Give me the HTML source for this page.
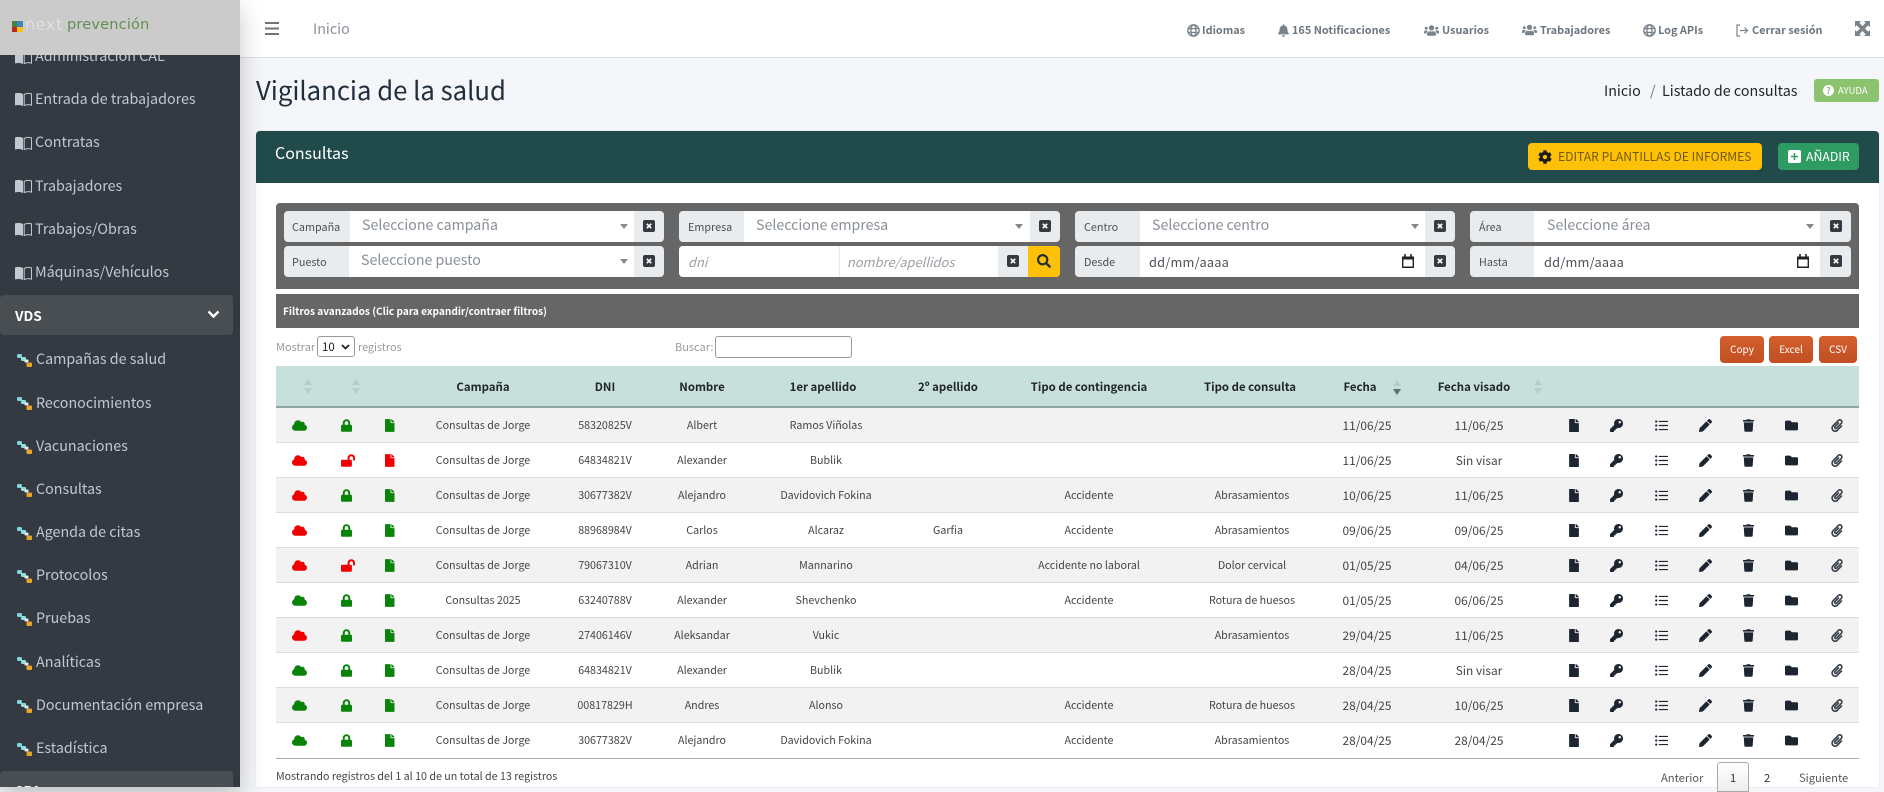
<!DOCTYPE html>
<html lang="es"><head><meta charset="utf-8"><title>Vigilancia de la salud</title>
<style>
*{box-sizing:border-box}
html,body{margin:0;padding:0}
body{width:1884px;height:787px;overflow:hidden;position:relative;background:#f4f6f9;font-family:"Noto Sans CJK JP","Liberation Sans",sans-serif;color:#212529}
.a{position:absolute}
.t{position:absolute;white-space:nowrap;line-height:20px}
svg{position:absolute;fill:currentColor;display:block}
#side{left:0;top:0;width:240px;height:787px;background:#353a42;box-shadow:0 10px 24px rgba(0,0,0,.22);overflow:hidden;z-index:5}
#logo{left:0;top:0;width:240px;height:55px;background:#cbcbcb;z-index:2}
.m{font-size:14.3px;color:#c2c7d0;left:35px}
.s{left:36px}
.pill{left:0;width:233px;background:#494e53;border-radius:4px}
#nav{left:240px;top:0;width:1644px;height:58px;background:#fff;border-bottom:1px solid #dee2e6;z-index:1}
.n{font-size:10.9px;font-weight:700;color:#6c757d;top:20px}
.ni{color:#7b838a}
#card{left:256px;top:131px;width:1623px;height:656px;background:#fff;border-radius:4px 4px 0 0;box-shadow:0 0 1px rgba(0,0,0,.2)}
.ig{position:absolute;height:31px;border-radius:4px;background:#e9ecef}
.in{position:absolute;background:#fff;height:31px}
.lb{font-size:10.8px;color:#495057}
.ph{font-size:14.2px;color:#8a9097;margin-top:1px}
.it{font-size:12.9px;font-style:italic;color:#9aa0a6}
.dt{font-size:12.8px;color:#495057}
.x{position:absolute;width:12px;height:12px;background:#343a40;border-radius:2px;color:#fff}
.caret{position:absolute;width:0;height:0;border-left:4px solid transparent;border-right:4px solid transparent;border-top:5px solid #888}
.h{font-size:11.4px;font-weight:700;color:#212529;top:377px;width:200px;text-align:center}
.sort{position:absolute;width:8px;height:16px;top:379px}
.sort:before,.sort:after{content:"";position:absolute;left:0;border-left:4px solid transparent;border-right:4px solid transparent}
.sort:before{top:0;border-bottom:6px solid #b3cfca}
.sort:after{bottom:1px;border-top:6px solid #b3cfca}
.r{position:absolute;left:276px;width:1583px;height:35px;border-bottom:1px solid #ddd;font-size:10.7px;color:#444}
.r.o{background:#f2f2f2}
.r span{position:absolute;width:220px;text-align:center;top:8px;line-height:20px;white-space:nowrap}
.c1{left:97px}.c2{left:219px}.c3{left:316px}.c4{left:440px}.c5{left:562px}.c6{left:703px}.c7{left:866px}.c8{left:981px;font-size:11.9px}.c9{left:1093px;font-size:11.9px}
.r svg{top:11px;height:13px;color:#1d2531}
.g{color:#0a830a!important}.e{color:#f00000!important}
.i1{left:16px;width:15px}.i2{left:65px;width:11px}.i3{left:109px;width:9.5px}
.a1{left:1293px;width:10px}.a2{left:1334px;width:13px}.a3{left:1379px;width:13px}.a4{left:1423px;width:13px}.a5{left:1467px;width:11px}.a6{left:1509px;width:13px}.a7{left:1555px;width:12px;color:#3a414c!important}
.dtb{position:absolute;top:336px;height:27px;border-radius:4px;background:linear-gradient(#d45f2e,#c14f22);color:#fff;font-size:10px;text-align:center;line-height:25px}
</style></head><body>
<svg width="0" height="0" style="position:absolute"><defs>
<symbol id="file" viewBox="0 0 384 512"><path d="M224 136V0H24C10.7 0 0 10.7 0 24v464c0 13.3 10.7 24 24 24h336c13.3 0 24-10.7 24-24V160H248c-13.2 0-24-10.8-24-24zm160-14.1v6.1H256V0h6.1c6.4 0 12.5 2.5 17 7l97.9 98c4.5 4.5 7 10.6 7 16.9z"/></symbol>
<symbol id="cloud" viewBox="0 0 640 512"><path d="M537.6 226.6c4.1-10.7 6.4-22.4 6.4-34.6 0-53-43-96-96-96-19.7 0-38.1 6-53.3 16.2C367 64.2 315.3 32 256 32c-88.4 0-160 71.6-160 160 0 2.7.1 5.4.2 8.1C40.2 219.8 0 273.2 0 336c0 79.5 64.5 144 144 144h368c70.7 0 128-57.3 128-128 0-61.9-44-113.6-102.4-125.4z"/></symbol>
<symbol id="lock" viewBox="0 0 448 512"><path d="M400 224h-24v-72C376 68.2 307.8 0 224 0S72 68.2 72 152v72H48c-26.5 0-48 21.5-48 48v192c0 26.5 21.5 48 48 48h352c26.5 0 48-21.5 48-48V272c0-26.5-21.5-48-48-48zm-104 0H152v-72c0-39.7 32.3-72 72-72s72 32.3 72 72v72z"/></symbol>
<symbol id="unlock" viewBox="0 0 576 512"><path d="M423.5 0C339.5.3 272 69.5 272 153.5V224H48c-26.5 0-48 21.5-48 48v192c0 26.5 21.5 48 48 48h352c26.5 0 48-21.5 48-48V272c0-26.5-21.5-48-48-48h-48v-71.1c0-39.6 31.7-72.5 71.3-72.9 40-.4 72.7 32.1 72.7 72v80c0 13.3 10.7 24 24 24h32c13.3 0 24-10.7 24-24v-80C576 68 507.5-.3 423.5 0z"/></symbol>
<symbol id="key" viewBox="0 0 512 512"><path d="M512 176.001C512 273.203 433.202 352 336 352c-11.22 0-22.19-1.062-32.827-3.069l-24.012 27.014A23.999 23.999 0 0 1 261.223 384H224v40c0 13.255-10.745 24-24 24h-40v40c0 13.255-10.745 24-24 24H24c-13.255 0-24-10.745-24-24v-78.059c0-6.365 2.529-12.47 7.029-16.971l161.802-161.802C163.108 213.814 160 195.271 160 176 160 78.798 238.797.001 335.999 0 433.488-.001 512 78.511 512 176.001zM336 128c0 26.51 21.49 48 48 48s48-21.49 48-48-21.49-48-48-48-48 21.49-48 48z"/></symbol>
<symbol id="list" viewBox="0 0 512 512"><circle cx="48" cy="96" r="44"/><circle cx="48" cy="256" r="44"/><circle cx="48" cy="416" r="44"/><rect x="150" y="72" width="362" height="48" rx="12"/><rect x="150" y="232" width="362" height="48" rx="12"/><rect x="150" y="392" width="362" height="48" rx="12"/></symbol>
<symbol id="pencil" viewBox="0 0 512 512"><path d="M497.9 142.1l-46.1 46.1c-4.7 4.7-12.3 4.7-17 0l-111-111c-4.7-4.7-4.7-12.3 0-17l46.1-46.1c18.7-18.7 49.1-18.7 67.9 0l60.1 60.1c18.8 18.7 18.8 49.1 0 67.9zM284.2 99.8L21.6 362.4.4 483.9c-2.9 16.4 11.4 30.6 27.8 27.8l121.5-21.3 262.6-262.6c4.7-4.7 4.7-12.3 0-17l-111-111c-4.8-4.7-12.4-4.7-17.1 0z"/></symbol>
<symbol id="trash" viewBox="0 0 448 512"><path d="M432 32H312l-9.4-18.7A24 24 0 0 0 281.1 0H166.8a23.72 23.72 0 0 0-21.4 13.3L136 32H16A16 16 0 0 0 0 48v32a16 16 0 0 0 16 16h416a16 16 0 0 0 16-16V48a16 16 0 0 0-16-16zM53.2 467a48 48 0 0 0 47.9 45h245.8a48 48 0 0 0 47.9-45L416 128H32z"/></symbol>
<symbol id="folder" viewBox="0 0 512 512"><path d="M464 128H272l-64-64H48C21.49 64 0 85.49 0 112v288c0 26.51 21.49 48 48 48h416c26.51 0 48-21.49 48-48V176c0-26.51-21.49-48-48-48z"/></symbol>
<symbol id="clip" viewBox="0 0 448 512"><path d="M43.246 466.142c-58.43-60.289-57.341-157.511 1.386-217.581L254.392 34c44.316-45.332 116.351-45.336 160.671 0 43.89 44.894 43.943 117.329 0 162.276L232.214 383.128c-29.855 30.537-78.633 30.111-107.982-.998-28.275-29.97-27.368-77.473 1.452-106.953l143.743-146.835c6.182-6.314 16.312-6.422 22.626-.241l22.861 22.379c6.315 6.182 6.422 16.312.241 22.626L171.427 319.927c-4.932 5.045-5.236 13.428-.648 18.292 4.372 4.634 11.245 4.711 15.688.165l182.849-186.851c19.613-20.062 19.613-52.725-.011-72.798-19.189-19.627-49.957-19.637-69.154 0L90.39 293.295c-34.763 35.56-35.299 93.12-1.191 128.313 34.01 35.093 88.985 35.137 123.058.286l172.06-175.999c6.177-6.319 16.307-6.433 22.626-.256l22.877 22.364c6.319 6.177 6.434 16.307.256 22.626l-172.06 175.998c-59.576 60.938-155.943 60.216-214.77-.485z"/></symbol>
<symbol id="search" viewBox="0 0 512 512"><path d="M505 442.7L405.3 343c-4.5-4.5-10.6-7-17-7H372c27.6-35.3 44-79.7 44-128C416 93.1 322.9 0 208 0S0 93.1 0 208s93.1 208 208 208c48.3 0 92.7-16.4 128-44v16.3c0 6.4 2.5 12.5 7 17l99.7 99.7c9.4 9.4 24.6 9.4 33.9 0l28.3-28.3c9.4-9.4 9.4-24.6.1-34zM208 336c-70.7 0-128-57.2-128-128 0-70.7 57.2-128 128-128 70.7 0 128 57.2 128 128 0 70.7-57.2 128-128 128z"/></symbol>
<symbol id="cog" viewBox="0 0 512 512"><path d="M487.4 315.7l-42.6-24.6c4.3-23.2 4.3-47 0-70.2l42.6-24.6c4.9-2.8 7.1-8.6 5.5-14-11.1-35.6-30-67.8-54.7-94.6-3.8-4.1-10-5.1-14.8-2.3L380.8 110c-17.9-15.4-38.5-27.3-60.8-35.1V25.8c0-5.6-3.9-10.5-9.4-11.7-36.7-8.2-74.3-7.8-109.2 0-5.5 1.2-9.4 6.1-9.4 11.7V75c-22.2 7.9-42.8 19.8-60.8 35.1L88.7 85.5c-4.9-2.8-11-1.9-14.8 2.3-24.7 26.7-43.6 58.9-54.7 94.6-1.7 5.4.6 11.2 5.5 14L67.3 221c-4.3 23.2-4.3 47 0 70.2l-42.6 24.6c-4.9 2.8-7.1 8.6-5.5 14 11.1 35.6 30 67.8 54.7 94.6 3.8 4.1 10 5.1 14.8 2.3l42.6-24.6c17.9 15.4 38.5 27.3 60.8 35.1v49.2c0 5.6 3.9 10.5 9.4 11.7 36.7 8.2 74.3 7.8 109.2 0 5.5-1.2 9.4-6.1 9.4-11.7v-49.2c22.2-7.9 42.8-19.8 60.8-35.1l42.6 24.6c4.9 2.8 11 1.9 14.8-2.3 24.7-26.7 43.6-58.9 54.7-94.6 1.5-5.5-.7-11.3-5.6-14.1zM256 336c-44.1 0-80-35.9-80-80s35.9-80 80-80 80 35.9 80 80-35.9 80-80 80z"/></symbol>
<symbol id="bell" viewBox="0 0 448 512"><path d="M224 512c35.32 0 63.97-28.65 63.97-64H160.03c0 35.35 28.65 64 63.97 64zm215.39-149.71c-19.32-20.76-55.47-51.99-55.47-154.29 0-77.7-54.48-139.9-127.94-155.16V32c0-17.67-14.32-32-31.98-32s-31.98 14.33-31.98 32v20.84C118.56 68.1 64.08 130.3 64.08 208c0 102.3-36.15 133.53-55.47 154.29-6 6.45-8.66 14.16-8.61 21.71.11 16.4 12.98 32 32.1 32h383.8c19.12 0 32-15.6 32.1-32 .05-7.55-2.61-15.27-8.61-21.71z"/></symbol>
<symbol id="users" viewBox="0 0 640 512"><path d="M96 224c35.3 0 64-28.7 64-64s-28.7-64-64-64-64 28.7-64 64 28.7 64 64 64zm448 0c35.3 0 64-28.7 64-64s-28.7-64-64-64-64 28.7-64 64 28.7 64 64 64zm32 32h-64c-17.6 0-33.5 7.1-45.1 18.6 40.3 22.1 68.9 62 75.1 109.4h66c17.7 0 32-14.3 32-32v-32c0-35.3-28.7-64-64-64zm-256 0c61.9 0 112-50.1 112-112S381.9 32 320 32 208 82.1 208 144s50.1 112 112 112zm76.8 32h-8.3c-20.8 10-43.9 16-68.5 16s-47.6-6-68.5-16h-8.3C179.6 288 128 339.6 128 403.2V432c0 26.5 21.5 48 48 48h288c26.5 0 48-21.5 48-48v-28.8c0-63.6-51.6-115.2-115.2-115.2zm-223.7-13.4C161.5 263.1 145.6 256 128 256H64c-35.3 0-64 28.7-64 64v32c0 17.7 14.3 32 32 32h65.9c6.3-47.4 34.9-87.3 75.2-109.4z"/></symbol>
<symbol id="globe" viewBox="0 0 16 16"><g fill="none" stroke="currentColor" stroke-width="1.7"><circle cx="8" cy="8" r="7"/><ellipse cx="8" cy="8" rx="3.2" ry="7"/><path d="M1.3 5.6h13.4M1.3 10.4h13.4"/></g></symbol>
<symbol id="book" viewBox="0 0 17 14"><path d="M0 1.5C2.5.6 5.5.7 8 2v12c-2.5-1.2-5.5-1.3-8-.5z" fill="#c2c7d0"/><path d="M9.2 2.4c2.3-1.2 4.9-1.3 7.3-.5v11.2c-2.4-.7-5-.6-7.3.5z" fill="none" stroke="#c2c7d0" stroke-width="1"/></symbol>
<symbol id="sub" viewBox="0 0 15 13"><rect x="0" y="0" width="5" height="4" rx="1.2" fill="#7fd6d6"/><rect x="4" y="3" width="5" height="4" rx="1.2" fill="#8fe0e0"/><rect x="7.5" y="5.5" width="4" height="3" rx="1" fill="#e8e8e8"/><rect x="9.5" y="8.500" width="5.5" height="4.5" rx="1.3" fill="#e8a52c"/></symbol>
<symbol id="close" viewBox="0 0 12 12"><path d="M3.8 3.8l4.4 4.4M8.2 3.8l-4.4 4.4" stroke="#fff" stroke-width="1.7" fill="none"/></symbol>
<symbol id="cal" viewBox="0 0 12 14"><path d="M0 2.5h12V14H0zM1.4 5.5v7h9.2v-7z" fill-rule="evenodd"/><path d="M2.2 0h1.6v3H2.2zM8.2 0h1.6v3H8.2z"/></symbol>
</defs></svg>

<div class="a" id="side">
 <div class="a" id="logo">
  <div class="a" style="left:12px;top:21px;width:5px;height:6px;background:#4f7f3f"></div>
  <div class="a" style="left:17px;top:21px;width:6px;height:6px;background:#3a86b8"></div>
  <div class="a" style="left:12px;top:27px;width:5px;height:5px;background:#c0281c"></div>
  <div class="a" style="left:17px;top:27px;width:6px;height:5px;background:#f5c518"></div>
  <div class="t" style="left:25px;top:15px;font:300 16px/20px 'DejaVu Sans',sans-serif;color:#efefef;letter-spacing:.6px">next</div>
  <div class="t" style="left:67px;top:15px;font:400 14.5px/20px 'DejaVu Sans',sans-serif;color:#5f8f52;letter-spacing:.2px">prevención</div>
 </div>
 <svg style="left:15px;top:50px;width:17px;height:14px"><use href="#book"/></svg><div class="t m" style="top:46px">Administración CAL</div>
 <svg style="left:15px;top:92px;width:17px;height:14px"><use href="#book"/></svg><div class="t m" style="top:89px">Entrada de trabajadores</div>
 <svg style="left:15px;top:136px;width:17px;height:14px"><use href="#book"/></svg><div class="t m" style="top:132px">Contratas</div>
 <svg style="left:15px;top:179px;width:17px;height:14px"><use href="#book"/></svg><div class="t m" style="top:176px">Trabajadores</div>
 <svg style="left:15px;top:222px;width:17px;height:14px"><use href="#book"/></svg><div class="t m" style="top:219px">Trabajos/Obras</div>
 <svg style="left:15px;top:266px;width:17px;height:14px"><use href="#book"/></svg><div class="t m" style="top:262px">Máquinas/Vehículos</div>
 <div class="a pill" style="top:295px;height:40px"></div>
 <div class="t" style="left:15px;top:305px;font-size:13.7px;font-weight:700;color:#fff">VDS</div>
 <svg style="left:207px;top:310px;width:13px;height:9px" viewBox="0 0 13 9"><path d="M1.5 1.5l5 5 5-5" fill="none" stroke="#fff" stroke-width="2.4"/></svg>
 <svg style="left:17px;top:354px;width:15px;height:13px"><use href="#sub"/></svg><div class="t m s" style="top:349px">Campañas de salud</div>
 <svg style="left:17px;top:397px;width:15px;height:13px"><use href="#sub"/></svg><div class="t m s" style="top:393px">Reconocimientos</div>
 <svg style="left:17px;top:441px;width:15px;height:13px"><use href="#sub"/></svg><div class="t m s" style="top:436px">Vacunaciones</div>
 <svg style="left:17px;top:484px;width:15px;height:13px"><use href="#sub"/></svg><div class="t m s" style="top:479px">Consultas</div>
 <svg style="left:17px;top:527px;width:15px;height:13px"><use href="#sub"/></svg><div class="t m s" style="top:522px">Agenda de citas</div>
 <svg style="left:17px;top:570px;width:15px;height:13px"><use href="#sub"/></svg><div class="t m s" style="top:565px">Protocolos</div>
 <svg style="left:17px;top:613px;width:15px;height:13px"><use href="#sub"/></svg><div class="t m s" style="top:608px">Pruebas</div>
 <svg style="left:17px;top:657px;width:15px;height:13px"><use href="#sub"/></svg><div class="t m s" style="top:652px">Analíticas</div>
 <svg style="left:17px;top:700px;width:15px;height:13px"><use href="#sub"/></svg><div class="t m s" style="top:695px">Documentación empresa</div>
 <svg style="left:17px;top:743px;width:15px;height:13px"><use href="#sub"/></svg><div class="t m s" style="top:738px">Estadística</div>
 <div class="a pill" style="top:771px;height:40px"></div>
 <div class="t" style="left:15px;top:780px;font-size:13.7px;font-weight:700;color:#fff">SPA</div>
</div>

<div class="a" id="nav"></div>
<div style="position:absolute;z-index:2;left:0;top:0;width:1884px;height:58px">
 <svg style="left:265px;top:22px;width:14px;height:13px;color:#6c757d" viewBox="0 0 14 13"><path d="M0 0h14v2H0zM0 5.5h14v2H0zM0 11h14v2H0z"/></svg>
 <div class="t" style="left:313px;top:19px;font-size:14.3px;color:#8a9199">Inicio</div>
 <svg class="ni" style="left:1187px;top:24px;width:13px;height:13px"><use href="#globe"/></svg><div class="t n" style="left:1202px">Idiomas</div>
 <svg class="ni" style="left:1278px;top:24px;width:11px;height:13px"><use href="#bell"/></svg><div class="t n" style="left:1292px">165 Notificaciones</div>
 <svg class="ni" style="left:1424px;top:24px;width:15px;height:13px"><use href="#users"/></svg><div class="t n" style="left:1442px">Usuarios</div>
 <svg class="ni" style="left:1522px;top:24px;width:15px;height:12px"><use href="#users"/></svg><div class="t n" style="left:1540px">Trabajadores</div>
 <svg class="ni" style="left:1643px;top:24px;width:13px;height:13px"><use href="#globe"/></svg><div class="t n" style="left:1658px">Log APIs</div>
 <svg class="ni" style="left:1736px;top:24px;width:13px;height:13px" viewBox="0 0 13 13"><path d="M4 1H1v11h3" fill="none" stroke="currentColor" stroke-width="1.2"/><path d="M4 6.500h7M8.500 3.500l3 3-3 3" fill="none" stroke="currentColor" stroke-width="1.2"/></svg><div class="t n" style="left:1752px">Cerrar sesión</div>
 <svg class="ni" style="left:1855px;top:21px;width:15px;height:15px" viewBox="0 0 15 15"><path d="M0 0h6L4.4 1.8 7.5 5l3.1-3.2L9 0h6v6l-1.8-1.6L10 7.5l3.2 3.1L15 9v6H9l1.6-1.8L7.5 10l-3.1 3.2L6 15H0V9l1.8 1.6L5 7.5 1.8 4.4 0 6z"/></svg>
</div>

<div class="t" style="left:256px;top:70px;font-size:25.7px;line-height:40px;color:#1f2d3d">Vigilancia de la salud</div>
<div class="t" style="left:1604px;top:81px;font-size:14.3px;color:#212529">Inicio</div>
<div class="t" style="left:1650px;top:81px;font-size:14.3px;color:#6c757d">/</div>
<div class="t" style="left:1662px;top:81px;font-size:14.3px;color:#212529">Listado de consultas</div>
<div class="a" style="left:1814px;top:79px;width:65px;height:23px;background:#8bc36f;border-radius:3px"></div>
<div class="a" style="left:1823px;top:85px;width:11px;height:11px;background:#fff;border-radius:50%;color:#8bc36f;font-size:9px;line-height:11px;text-align:center;font-weight:700">?</div>
<div class="t" style="left:1838px;top:80px;font-size:9.5px;color:#fff">AYUDA</div>

<div class="a" id="card"></div>
<div class="a" style="left:256px;top:131px;width:1623px;height:52px;background:#214b4b;border-radius:4px 4px 0 0"></div>
<div class="t" style="left:275px;top:141px;font-size:16px;line-height:22px;color:#fff">Consultas</div>
<div class="a" style="left:1528px;top:143px;width:234px;height:27px;background:#ffc107;border-radius:4px"></div>
<svg style="left:1538px;top:150px;width:14px;height:14px;color:#1a1a1a"><use href="#cog"/></svg>
<div class="t" style="left:1558px;top:147px;font-size:12.15px;color:#6e5a12">EDITAR PLANTILLAS DE INFORMES</div>
<div class="a" style="left:1778px;top:143px;width:81px;height:27px;background:#2e9b63;border-radius:4px"></div>
<svg style="left:1788px;top:150px;width:13px;height:13px" viewBox="0 0 13 13"><rect width="13" height="13" rx="2" fill="#fff"/><path d="M6.5 3v7M3 6.5h7" stroke="#2e9b63" stroke-width="1.5"/></svg>
<div class="t" style="left:1806px;top:146px;font-size:12.3px;color:#fff">AÑADIR</div>

<!-- filtros -->
<div class="a" style="left:276px;top:203px;width:1583px;height:86px;background:#666;border-radius:4px 4px 0 0"></div>

<div class="ig" style="left:284px;top:211px;width:380px"></div><div class="in" style="left:350px;top:211px;width:284px"></div>
<div class="t lb" style="left:292px;top:217px">Campaña</div><div class="t ph" style="left:362px;top:214px">Seleccione campaña</div><div class="caret" style="left:620px;top:224px"></div>
<div class="x" style="left:643px;top:220px"><svg style="width:12px;height:12px"><use href="#close"/></svg></div>

<div class="ig" style="left:284px;top:246px;width:380px"></div><div class="in" style="left:349px;top:246px;width:285px"></div>
<div class="t lb" style="left:292px;top:252px">Puesto</div><div class="t ph" style="left:361px;top:249px">Seleccione puesto</div><div class="caret" style="left:620px;top:259px"></div>
<div class="x" style="left:643px;top:255px"><svg style="width:12px;height:12px"><use href="#close"/></svg></div>

<div class="ig" style="left:679px;top:211px;width:381px"></div><div class="in" style="left:744px;top:211px;width:286px"></div>
<div class="t lb" style="left:688px;top:217px">Empresa</div><div class="t ph" style="left:756px;top:214px">Seleccione empresa</div><div class="caret" style="left:1015px;top:224px"></div>
<div class="x" style="left:1039px;top:220px"><svg style="width:12px;height:12px"><use href="#close"/></svg></div>

<div class="ig" style="left:679px;top:246px;width:381px"></div>
<div class="in" style="left:679px;top:246px;width:160px;border-radius:4px 0 0 4px"></div>
<div class="in" style="left:840px;top:246px;width:158px"></div>
<div class="t it" style="left:688px;top:252px">dni</div><div class="t it" style="left:847px;top:252px">nombre/apellidos</div>
<div class="x" style="left:1007px;top:255px"><svg style="width:12px;height:12px"><use href="#close"/></svg></div>
<div class="a" style="left:1028px;top:246px;width:32px;height:31px;background:#ffc107;border-radius:0 4px 4px 0"></div>
<svg style="left:1037px;top:254px;width:14px;height:14px;color:#1f2d3d"><use href="#search"/></svg>

<div class="ig" style="left:1075px;top:211px;width:380px"></div><div class="in" style="left:1140px;top:211px;width:285px"></div>
<div class="t lb" style="left:1084px;top:217px">Centro</div><div class="t ph" style="left:1152px;top:214px">Seleccione centro</div><div class="caret" style="left:1411px;top:224px"></div>
<div class="x" style="left:1434px;top:220px"><svg style="width:12px;height:12px"><use href="#close"/></svg></div>

<div class="ig" style="left:1075px;top:246px;width:380px"></div><div class="in" style="left:1140px;top:246px;width:285px"></div>
<div class="t lb" style="left:1084px;top:252px">Desde</div><div class="t dt" style="left:1149px;top:252px;letter-spacing:.2px">dd/mm/aaaa</div>
<svg style="left:1402px;top:254px;width:12px;height:14px;color:#222"><use href="#cal"/></svg>
<div class="x" style="left:1434px;top:255px"><svg style="width:12px;height:12px"><use href="#close"/></svg></div>

<div class="ig" style="left:1470px;top:211px;width:381px"></div><div class="in" style="left:1534px;top:211px;width:286px"></div>
<div class="t lb" style="left:1479px;top:217px">Área</div><div class="t ph" style="left:1547px;top:214px">Seleccione área</div><div class="caret" style="left:1806px;top:224px"></div>
<div class="x" style="left:1830px;top:220px"><svg style="width:12px;height:12px"><use href="#close"/></svg></div>

<div class="ig" style="left:1470px;top:246px;width:381px"></div><div class="in" style="left:1534px;top:246px;width:286px"></div>
<div class="t lb" style="left:1479px;top:252px">Hasta</div><div class="t dt" style="left:1544px;top:252px;letter-spacing:.2px">dd/mm/aaaa</div>
<svg style="left:1797px;top:254px;width:12px;height:14px;color:#222"><use href="#cal"/></svg>
<div class="x" style="left:1830px;top:255px"><svg style="width:12px;height:12px"><use href="#close"/></svg></div>

<div class="a" style="left:276px;top:294px;width:1583px;height:34px;background:#666"></div>
<div class="t" style="left:283px;top:301px;font-size:10.1px;font-weight:700;color:#fff">Filtros avanzados (Clic para expandir/contraer filtros)</div>

<div class="t" style="left:276px;top:337px;font-size:11px;color:#999">Mostrar</div>
<div class="a" style="left:317px;top:336px;width:38px;height:21px;border:1px solid #999;border-radius:3px;background:#fff"></div>
<div class="t" style="left:322px;top:337px;font-size:11.5px;color:#222">10</div>
<svg style="left:341px;top:344px;width:9px;height:6px;color:#222" viewBox="0 0 9 6"><path d="M1 1l3.5 3.5L8 1" fill="none" stroke="currentColor" stroke-width="1.8"/></svg>
<div class="t" style="left:358px;top:337px;font-size:10.8px;color:#999">registros</div>
<div class="t" style="left:675px;top:337px;font-size:11px;color:#999">Buscar:</div>
<div class="a" style="left:715px;top:336px;width:137px;height:22px;border:1px solid #999;border-radius:3px;background:#fff"></div>

<div class="dtb" style="left:1720px;width:44px">Copy</div>
<div class="dtb" style="left:1769px;width:44px">Excel</div>
<div class="dtb" style="left:1819px;width:38px">CSV</div>

<!-- tabla -->
<div class="a" style="left:276px;top:366px;width:1583px;height:42px;background:#c7e0dc;border-bottom:2px solid #8fa5a1"></div>
<div class="sort" style="left:304px"></div><div class="sort" style="left:352px"></div><div class="sort" style="left:1534px"></div>
<div class="t h" style="left:383px">Campaña</div>
<div class="t h" style="left:505px">DNI</div>
<div class="t h" style="left:602px">Nombre</div>
<div class="t h" style="left:723px">1er apellido</div>
<div class="t h" style="left:848px">2º apellido</div>
<div class="t h" style="left:989px">Tipo de contingencia</div>
<div class="t h" style="left:1150px">Tipo de consulta</div>
<div class="t h" style="left:1260px">Fecha</div>
<div class="a" style="left:1393px;top:380px;width:8px;height:16px"><div class="a" style="left:0;top:0;border-left:4px solid transparent;border-right:4px solid transparent;border-bottom:6px solid #b3cfca"></div><div class="a" style="left:0;bottom:1px;border-left:4px solid transparent;border-right:4px solid transparent;border-top:6px solid #5e6f6c"></div></div>
<div class="t h" style="left:1374px">Fecha visado</div>

<div class="r o" style="top:408px"><svg class="i1 g"><use href="#cloud"/></svg><svg class="i2 g"><use href="#lock"/></svg><svg class="i3 g"><use href="#file"/></svg><span class="c1">Consultas de Jorge</span><span class="c2">58320825V</span><span class="c3">Albert</span><span class="c4">Ramos Viñolas</span><span class="c5"></span><span class="c6"></span><span class="c7"></span><span class="c8">11/06/25</span><span class="c9">11/06/25</span><svg class="a1"><use href="#file"/></svg><svg class="a2"><use href="#key"/></svg><svg class="a3"><use href="#list"/></svg><svg class="a4"><use href="#pencil"/></svg><svg class="a5"><use href="#trash"/></svg><svg class="a6"><use href="#folder"/></svg><svg class="a7"><use href="#clip"/></svg></div>
<div class="r" style="top:443px"><svg class="i1 e"><use href="#cloud"/></svg><svg class="i2 e" style="width:14px"><use href="#unlock"/></svg><svg class="i3 e"><use href="#file"/></svg><span class="c1">Consultas de Jorge</span><span class="c2">64834821V</span><span class="c3">Alexander</span><span class="c4">Bublik</span><span class="c5"></span><span class="c6"></span><span class="c7"></span><span class="c8">11/06/25</span><span class="c9">Sin visar</span><svg class="a1"><use href="#file"/></svg><svg class="a2"><use href="#key"/></svg><svg class="a3"><use href="#list"/></svg><svg class="a4"><use href="#pencil"/></svg><svg class="a5"><use href="#trash"/></svg><svg class="a6"><use href="#folder"/></svg><svg class="a7"><use href="#clip"/></svg></div>
<div class="r o" style="top:478px"><svg class="i1 e"><use href="#cloud"/></svg><svg class="i2 g"><use href="#lock"/></svg><svg class="i3 g"><use href="#file"/></svg><span class="c1">Consultas de Jorge</span><span class="c2">30677382V</span><span class="c3">Alejandro</span><span class="c4">Davidovich Fokina</span><span class="c5"></span><span class="c6">Accidente</span><span class="c7">Abrasamientos</span><span class="c8">10/06/25</span><span class="c9">11/06/25</span><svg class="a1"><use href="#file"/></svg><svg class="a2"><use href="#key"/></svg><svg class="a3"><use href="#list"/></svg><svg class="a4"><use href="#pencil"/></svg><svg class="a5"><use href="#trash"/></svg><svg class="a6"><use href="#folder"/></svg><svg class="a7"><use href="#clip"/></svg></div>
<div class="r" style="top:513px"><svg class="i1 e"><use href="#cloud"/></svg><svg class="i2 g"><use href="#lock"/></svg><svg class="i3 g"><use href="#file"/></svg><span class="c1">Consultas de Jorge</span><span class="c2">88968984V</span><span class="c3">Carlos</span><span class="c4">Alcaraz</span><span class="c5">Garfia</span><span class="c6">Accidente</span><span class="c7">Abrasamientos</span><span class="c8">09/06/25</span><span class="c9">09/06/25</span><svg class="a1"><use href="#file"/></svg><svg class="a2"><use href="#key"/></svg><svg class="a3"><use href="#list"/></svg><svg class="a4"><use href="#pencil"/></svg><svg class="a5"><use href="#trash"/></svg><svg class="a6"><use href="#folder"/></svg><svg class="a7"><use href="#clip"/></svg></div>
<div class="r o" style="top:548px"><svg class="i1 e"><use href="#cloud"/></svg><svg class="i2 e" style="width:14px"><use href="#unlock"/></svg><svg class="i3 g"><use href="#file"/></svg><span class="c1">Consultas de Jorge</span><span class="c2">79067310V</span><span class="c3">Adrian</span><span class="c4">Mannarino</span><span class="c5"></span><span class="c6">Accidente no laboral</span><span class="c7">Dolor cervical</span><span class="c8">01/05/25</span><span class="c9">04/06/25</span><svg class="a1"><use href="#file"/></svg><svg class="a2"><use href="#key"/></svg><svg class="a3"><use href="#list"/></svg><svg class="a4"><use href="#pencil"/></svg><svg class="a5"><use href="#trash"/></svg><svg class="a6"><use href="#folder"/></svg><svg class="a7"><use href="#clip"/></svg></div>
<div class="r" style="top:583px"><svg class="i1 g"><use href="#cloud"/></svg><svg class="i2 g"><use href="#lock"/></svg><svg class="i3 g"><use href="#file"/></svg><span class="c1">Consultas 2025</span><span class="c2">63240788V</span><span class="c3">Alexander</span><span class="c4">Shevchenko</span><span class="c5"></span><span class="c6">Accidente</span><span class="c7">Rotura de huesos</span><span class="c8">01/05/25</span><span class="c9">06/06/25</span><svg class="a1"><use href="#file"/></svg><svg class="a2"><use href="#key"/></svg><svg class="a3"><use href="#list"/></svg><svg class="a4"><use href="#pencil"/></svg><svg class="a5"><use href="#trash"/></svg><svg class="a6"><use href="#folder"/></svg><svg class="a7"><use href="#clip"/></svg></div>
<div class="r o" style="top:618px"><svg class="i1 e"><use href="#cloud"/></svg><svg class="i2 g"><use href="#lock"/></svg><svg class="i3 g"><use href="#file"/></svg><span class="c1">Consultas de Jorge</span><span class="c2">27406146V</span><span class="c3">Aleksandar</span><span class="c4">Vukic</span><span class="c5"></span><span class="c6"></span><span class="c7">Abrasamientos</span><span class="c8">29/04/25</span><span class="c9">11/06/25</span><svg class="a1"><use href="#file"/></svg><svg class="a2"><use href="#key"/></svg><svg class="a3"><use href="#list"/></svg><svg class="a4"><use href="#pencil"/></svg><svg class="a5"><use href="#trash"/></svg><svg class="a6"><use href="#folder"/></svg><svg class="a7"><use href="#clip"/></svg></div>
<div class="r" style="top:653px"><svg class="i1 g"><use href="#cloud"/></svg><svg class="i2 g"><use href="#lock"/></svg><svg class="i3 g"><use href="#file"/></svg><span class="c1">Consultas de Jorge</span><span class="c2">64834821V</span><span class="c3">Alexander</span><span class="c4">Bublik</span><span class="c5"></span><span class="c6"></span><span class="c7"></span><span class="c8">28/04/25</span><span class="c9">Sin visar</span><svg class="a1"><use href="#file"/></svg><svg class="a2"><use href="#key"/></svg><svg class="a3"><use href="#list"/></svg><svg class="a4"><use href="#pencil"/></svg><svg class="a5"><use href="#trash"/></svg><svg class="a6"><use href="#folder"/></svg><svg class="a7"><use href="#clip"/></svg></div>
<div class="r o" style="top:688px"><svg class="i1 g"><use href="#cloud"/></svg><svg class="i2 g"><use href="#lock"/></svg><svg class="i3 g"><use href="#file"/></svg><span class="c1">Consultas de Jorge</span><span class="c2">00817829H</span><span class="c3">Andres</span><span class="c4">Alonso</span><span class="c5"></span><span class="c6">Accidente</span><span class="c7">Rotura de huesos</span><span class="c8">28/04/25</span><span class="c9">10/06/25</span><svg class="a1"><use href="#file"/></svg><svg class="a2"><use href="#key"/></svg><svg class="a3"><use href="#list"/></svg><svg class="a4"><use href="#pencil"/></svg><svg class="a5"><use href="#trash"/></svg><svg class="a6"><use href="#folder"/></svg><svg class="a7"><use href="#clip"/></svg></div>
<div class="r" style="top:723px;height:36px;border-bottom-color:#aaa"><svg class="i1 g"><use href="#cloud"/></svg><svg class="i2 g"><use href="#lock"/></svg><svg class="i3 g"><use href="#file"/></svg><span class="c1">Consultas de Jorge</span><span class="c2">30677382V</span><span class="c3">Alejandro</span><span class="c4">Davidovich Fokina</span><span class="c5"></span><span class="c6">Accidente</span><span class="c7">Abrasamientos</span><span class="c8">28/04/25</span><span class="c9">28/04/25</span><svg class="a1"><use href="#file"/></svg><svg class="a2"><use href="#key"/></svg><svg class="a3"><use href="#list"/></svg><svg class="a4"><use href="#pencil"/></svg><svg class="a5"><use href="#trash"/></svg><svg class="a6"><use href="#folder"/></svg><svg class="a7"><use href="#clip"/></svg></div>

<div class="t" style="left:276px;top:767px;font-size:10.7px;color:#444">Mostrando registros del 1 al 10 de un total de 13 registros</div>
<div class="t" style="left:1661px;top:768px;font-size:11.2px;color:#555">Anterior</div>
<div class="a" style="left:1717px;top:762px;width:32px;height:30px;border:1px solid #aaa;border-radius:3px 3px 0 0;background:linear-gradient(#fff,#eee)"></div>
<div class="t" style="left:1730px;top:768px;font-size:11.2px;color:#333">1</div>
<div class="t" style="left:1764px;top:768px;font-size:11.2px;color:#333">2</div>
<div class="t" style="left:1799px;top:768px;font-size:11.2px;color:#555">Siguiente</div>
</body></html>
